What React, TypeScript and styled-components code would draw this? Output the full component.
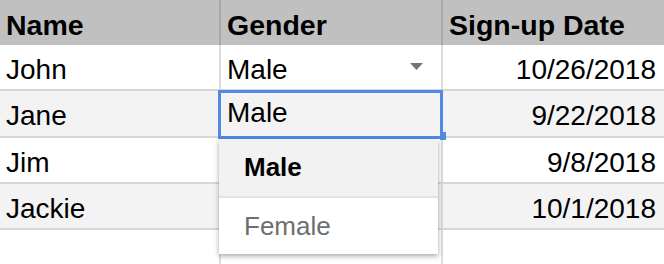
import styled, { createGlobalStyle } from 'styled-components';

const GlobalStyle = createGlobalStyle`
  html, body {
    margin: 0;
    padding: 0;
    background: #fff;
  }
  * {
    box-sizing: border-box;
  }
`;

const Sheet = styled.div`
  position: relative;
  width: 664px;
  height: 264px;
  overflow: hidden;
  background: #fff;
  font-family: 'Liberation Sans', Arial, sans-serif;
  color: #000;
`;

const Row = styled.div<{ $head?: boolean; $shade?: boolean; $height: number; $last?: boolean }>`
  display: grid;
  grid-template-columns: 221px 222px 221px;
  height: ${(p) => p.$height}px;
  background: ${(p) => (p.$head ? '#c0c0c0' : p.$shade ? '#f3f3f3' : '#fff')};
  border-bottom: ${(p) => (p.$head || p.$last ? 'none' : '2px solid #d6d6d6')};
`;

const Cell = styled.div<{ $head?: boolean; $right?: boolean; $edge?: boolean }>`
  display: flex;
  align-items: flex-start;
  justify-content: ${(p) => (p.$right ? 'flex-end' : 'space-between')};
  padding: 10px ${(p) => (p.$right ? '8px' : '6px')} 0 6px;
  font-size: ${(p) => (p.$head ? '28.5px' : '28px')};
  line-height: 30px;
  font-weight: ${(p) => (p.$head ? 700 : 400)};
  border-right: ${(p) =>
    p.$edge ? 'none' : p.$head ? '2px solid #a9a9a9' : '2px solid #dcdcdc'};
  white-space: nowrap;
`;

const Caret = styled.svg`
  width: 13px;
  height: 7px;
  margin: 8px 12px 0 0;
  flex-shrink: 0;
`;

// cell editor that sits over the Jane / Gender cell
const Editor = styled.div`
  position: absolute;
  left: 218px;
  top: 90px;
  width: 225px;
  height: 49px;
  border: 3px solid #4f8ae6;
  background: #f3f3f3;
  padding: 5px 0 0 6px;
  font-size: 28px;
  line-height: 30px;
`;

const Handle = styled.div`
  position: absolute;
  right: -6px;
  bottom: -4px;
  width: 6px;
  height: 8px;
  background: #4f8ae6;
`;

const Menu = styled.div`
  position: absolute;
  left: 219px;
  top: 139px;
  width: 219px;
  height: 115px;
  background: #fff;
  box-shadow: 0 2px 5px rgba(0, 0, 0, 0.35);
  display: flex;
  flex-direction: column;
`;

const Option = styled.div<{ $selected?: boolean }>`
  height: ${(p) => (p.$selected ? '59px' : '56px')};
  display: flex;
  align-items: center;
  padding-left: 25px;
  font-size: 26px;
  font-weight: ${(p) => (p.$selected ? 700 : 400)};
  color: ${(p) => (p.$selected ? '#000' : '#6e6e6e')};
  background: ${(p) => (p.$selected ? '#f2f2f2' : '#fff')};
  border-bottom: ${(p) => (p.$selected ? '2px solid #e3e3e3' : 'none')};
`;

const people = [
  { name: 'John', gender: 'Male', date: '10/26/2018', caret: true },
  { name: 'Jane', gender: '', date: '9/22/2018' },
  { name: 'Jim', gender: '', date: '9/8/2018' },
  { name: 'Jackie', gender: '', date: '10/1/2018' },
];

export default function App() {
  return (
    <>
      <GlobalStyle />
      <Sheet>
        <Row $head $height={45}>
          <Cell $head>Name</Cell>
          <Cell $head>Gender</Cell>
          <Cell $head $edge>
            Sign-up Date
          </Cell>
        </Row>
        {people.map((p, i) => (
          <Row key={p.name} $shade={i % 2 === 1} $height={i === 1 ? 47 : 46}>
            <Cell>{p.name}</Cell>
            <Cell>
              <span>{p.gender}</span>
              {p.caret && (
                <Caret viewBox='0 0 13 7'>
                  <polygon points='0,0 13,0 6.5,7' fill='#747474' />
                </Caret>
              )}
            </Cell>
            <Cell $right $edge>
              {p.date}
            </Cell>
          </Row>
        ))}
        <Row $height={40} $last>
          <Cell />
          <Cell />
          <Cell $edge />
        </Row>

        <Editor>
          Male
          <Handle />
        </Editor>
        <Menu>
          <Option $selected>Male</Option>
          <Option>Female</Option>
        </Menu>
      </Sheet>
    </>
  );
}
